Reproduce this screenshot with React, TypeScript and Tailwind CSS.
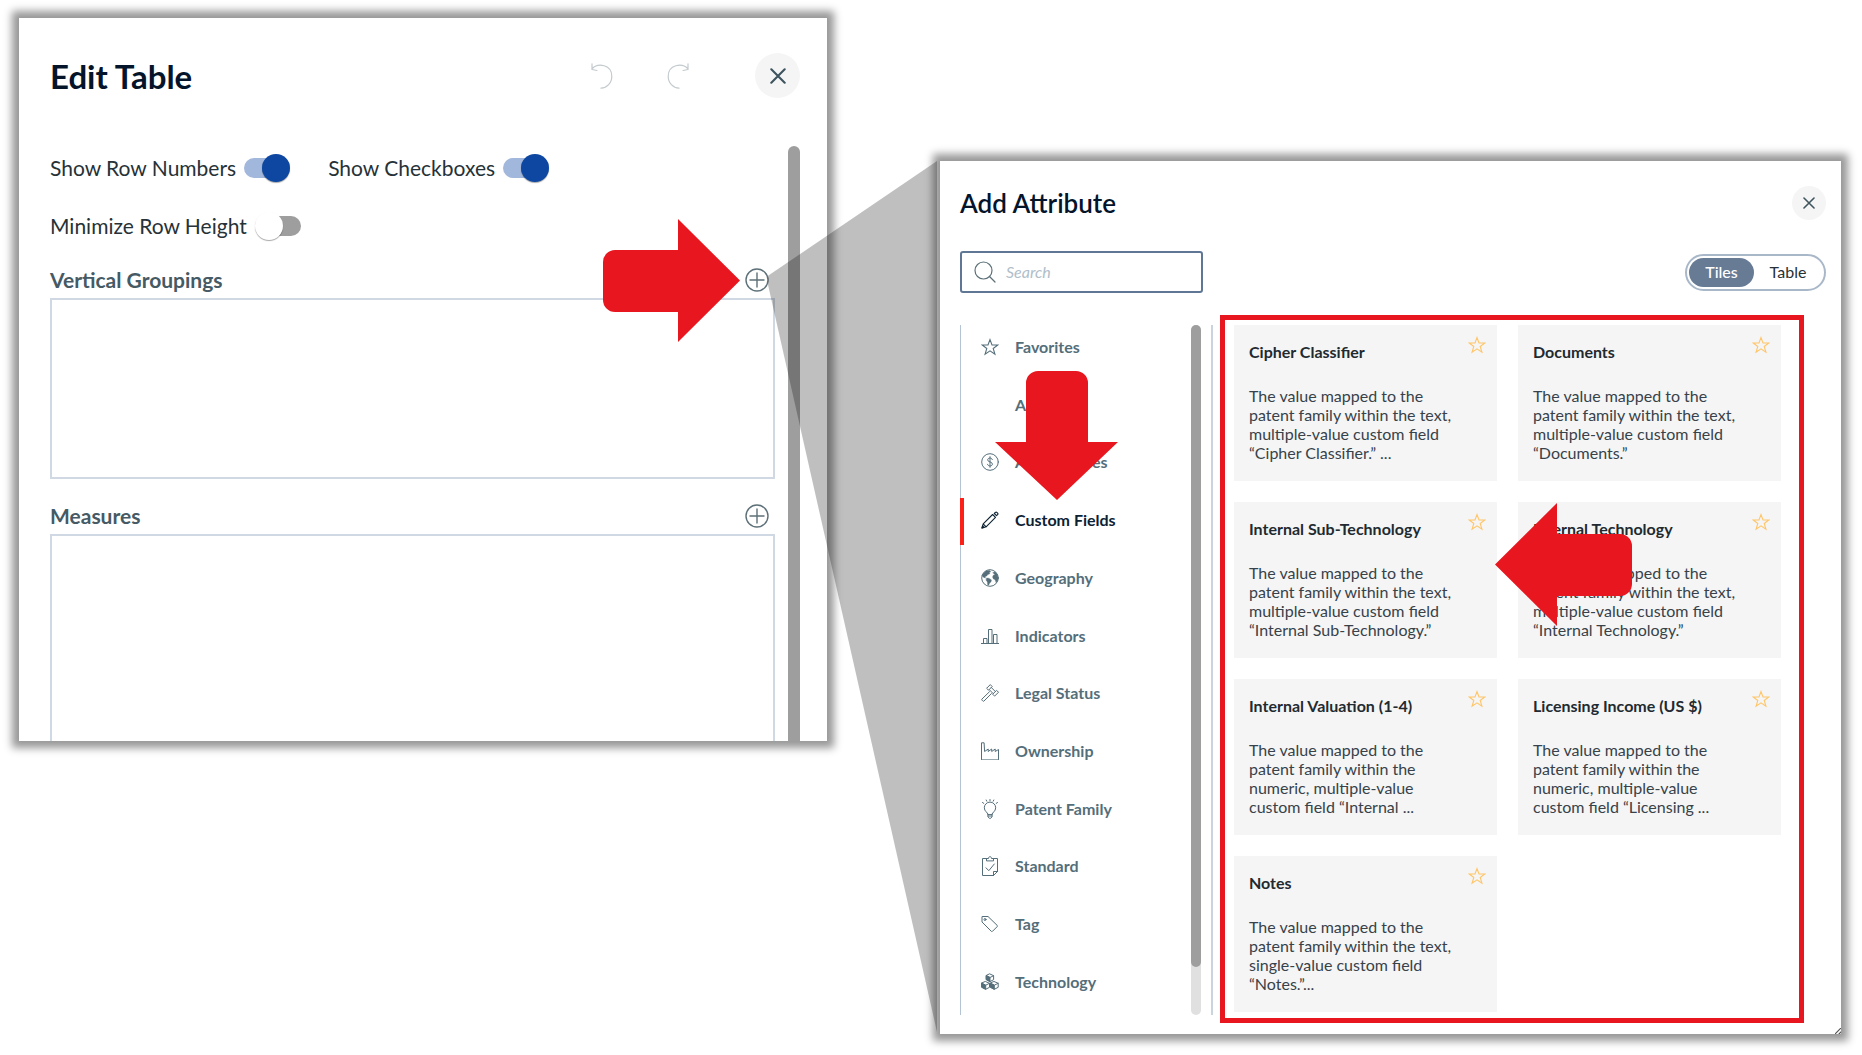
import React from "react";

type IconProps = { className?: string };

const svgBase = {
  fill: "none",
  stroke: "currentColor",
  strokeLinecap: "round" as const,
  strokeLinejoin: "round" as const,
  "aria-hidden": true,
};

function StarIcon({ className = "size-[18px]" }: IconProps) {
  return (
    <svg viewBox="0 0 18 18" strokeWidth="1.1" {...svgBase} strokeLinejoin="miter" className={className}>
      <path d="M9 1.6 11 7h5.8l-4.6 3.5 1.7 5.7L9 12.8l-4.9 3.4 1.7-5.7L1.200 7H7z" />
    </svg>
  );
}

function DollarIcon() {
  return (
    <svg viewBox="0 0 18 18" strokeWidth="1" {...svgBase} className="size-[18px]">
      <circle cx="9" cy="9" r="8.300" />
      <path d="M11.300 6.600C11 5.500 10.100 5 9 5 7.700 5 6.700 5.700 6.700 6.900c0 2.700 4.700 1.400 4.700 4.200 0 1.200-1.100 1.900-2.400 1.900-1.300 0-2.200-.6-2.500-1.700M9 3.700v10.600" />
    </svg>
  );
}

function PencilIcon() {
  return (
    <svg viewBox="0 0 18 18" strokeWidth="1.1" {...svgBase} className="size-[18px]">
      <path d="M1 17l1.200-4.200L11.600 3.500l2.900 2.900L5.100 15.800zM2.200 12.800l2.900 3" />
      <path d="M13.300 2.500l1.100-1.100c.4-.4 1-.4 1.400 0l.8.800c.4.4.4 1 0 1.400l-1.100 1.100z" />
      <path d="M1 17l.6-2.100 1.500 1.500z" fill="currentColor" />
    </svg>
  );
}

function GlobeIcon() {
  return (
    <svg viewBox="0 0 18 18" strokeWidth="1" {...svgBase} className="size-[18px]">
      <circle cx="9" cy="9" r="8.300" />
      <path
        d="M2.200 4.500 5 1.900l3.600-.4 1.200 1.300-1.700.9.900 1-2.100.8-1.200 1.500-1.600.7.300 1.200-1.800-.5-1.500-1.600zM5.500 9l2.400.2 2.600 1.700-.5 2-1.300 1-1 2.300-1.100-.5-.2-2.800-1.300-1.600zM12 3.300l2.300-.3 2 2.600.9 3.400-.7 2.800-1.500 1.700-.9-2.700-1.700-.9-.9-2 1-1.900 1.700-.4-1.500-.8z"
        fill="currentColor"
        strokeWidth=".3"
      />
    </svg>
  );
}

function ChartIcon() {
  return (
    <svg viewBox="0 0 18 18" strokeWidth="1" {...svgBase} className="size-[18px]">
      <path d="M0 16.500h18M2.500 16V11.500h3.500V16M7.500 16V2.500H11V16M12.500 16V7.500H16V16" strokeLinecap="butt" strokeLinejoin="miter" />
    </svg>
  );
}

function GavelIcon() {
  return (
    <svg viewBox="0 0 18 18" strokeWidth="1" {...svgBase} className="size-[18px]">
      <path d="M9 .9 5.600 4.300l1.900 1.900 3.400-3.400zM15.200 6.700l-3.500 3.500 1.900 1.900 3.700-3.600zM10.300 3.500l4 4M8.200 5.600l4 4" />
      <path d="M8.500 7.700 1 15c-.4.400-.4.800 0 1.200l.8.800c.4.400.8.400 1.200 0l7.400-7.400" />
    </svg>
  );
}

function FactoryIcon() {
  return (
    <svg viewBox="0 0 18 18" strokeWidth="1" {...svgBase} strokeLinejoin="miter" className="size-[18px]">
      <path d="M.5 17.500V.8h2.600l.5 8.700L7.200 7v2.500L10.700 7v2.500L14.200 7v2.500L17.500 7.500v10z" />
    </svg>
  );
}

function BulbIcon() {
  return (
    <svg viewBox="0 0 18 20" strokeWidth="1" {...svgBase} className="h-5 w-[18px]">
      <path d="M6.800 15.200c0-2-3.500-2.700-3.500-6.400a5.700 5.700 0 0 1 11.400 0c0 3.700-3.500 4.400-3.500 6.400zM7 15.200v2.600L8.300 19.300h1.400L11 17.800v-2.600M7 17h4" />
      <path d="M9 .5v1.300M5.200 1l.6 1.200M12.800 1l-.6 1.200M1.500 3.500l1.300.9M16.500 3.500l-1.300.9" />
    </svg>
  );
}

function ClipboardIcon() {
  return (
    <svg viewBox="0 0 18 20" strokeWidth="1" {...svgBase} className="h-5 w-[18px]">
      <path d="M5.500 2.500h-4v17h11l4-4v-13h-4M12.500 19.500v-4h4" />
      <path d="M5.500 4.500v-2h2C7.500 1.300 8 .7 9 .7s1.500.6 1.500 1.800h2v2z" />
      <path d="M5 11.800l2.800 2.900L13.300 8" />
    </svg>
  );
}

function TagIcon() {
  return (
    <svg viewBox="0 0 18 18" strokeWidth="1" {...svgBase} className="size-[18px]">
      <path d="M1 2v5l9.300 9.300c.4.4.8.4 1.200 0l4.700-4.700c.4-.4.4-.8 0-1.200L7 1.500H1.500z" />
      <circle cx="4" cy="4.500" r="1" />
    </svg>
  );
}

function CubesIcon() {
  return (
    <svg viewBox="0 0 18 18" strokeWidth="1" {...svgBase} className="size-[18px]">
      <path d="M9 1l3.600 1.700v4L9 8.600 5.400 6.700v-4zM5.400 2.700 9 4.500l3.600-1.800M4.700 8.600l3.800 1.700v4l-3.800 2-3.900-2v-4zM.8 10.300l3.900 1.900 3.800-1.900M13.300 8.600l3.900 1.700v4l-3.900 2-3.800-2v-4zM9.500 10.300l3.800 1.900 3.900-1.900" />
      <path d="M5.400 2.700 9 4.500v4.100L5.400 6.700zM.8 10.300l3.900 1.900v4.100l-3.900-2zM9.500 10.300l3.800 1.900v4.100l-3.800-2z" fill="currentColor" />
    </svg>
  );
}

function CloseIcon({ className }: IconProps) {
  return (
    <svg viewBox="0 0 16 16" strokeWidth="2.1" {...svgBase} className={className}>
      <path d="M1.300 1.300l13.400 13.400M14.700 1.300 1.300 14.700" />
    </svg>
  );
}

function UndoIcon({ className = "" }: IconProps) {
  return (
    <svg viewBox="0 0 22 26" strokeWidth="1.200" {...svgBase} className={"h-[26px] w-[22px] " + className}>
      <path d="M1.300 5.500C7 -.5 20.800 1.500 20.800 13.200c0 6.800-4.800 11.600-10.800 11.900M1 .8v5.700l5 1" />
    </svg>
  );
}

function PlusCircleIcon() {
  return (
    <svg viewBox="0 0 24 24" strokeWidth="1.400" {...svgBase} className="size-6">
      <circle cx="12" cy="12" r="11" />
      <path d="M12 5v14M5 12h14" />
    </svg>
  );
}

function SideArrow({ className = "" }: IconProps) {
  return (
    <svg viewBox="0 0 137 123" aria-hidden="true" className={"pointer-events-none absolute z-20 h-[123px] w-[137px] text-[#e8171f] " + className}>
      <path d="M12 31h63V0l62 61.500L75 123V93H12A12 12 0 0 1 0 81V43A12 12 0 0 1 12 31z" fill="currentColor" />
    </svg>
  );
}

function DownArrow({ className = "" }: IconProps) {
  return (
    <svg viewBox="0 0 123 129" aria-hidden="true" className={"pointer-events-none absolute z-20 h-[129px] w-[123px] text-[#e8171f] " + className}>
      <path d="M31 12A12 12 0 0 1 43 0H81A12 12 0 0 1 93 12V71h30L62 129 0 71H31z" fill="currentColor" />
    </svg>
  );
}

function Toggle({ label, on = false }: { label: string; on?: boolean }) {
  return (
    <label className="flex items-center gap-2">
      {label}
      <span className="relative flex h-8 w-12 items-center">
        <input
          type="checkbox"
          role="switch"
          defaultChecked={on}
          className="peer h-5 w-[46px] appearance-none rounded-full bg-[#9e9e9e] bg-clip-content pl-1 checked:bg-[#a2b7dc] checked:pr-1 checked:pl-0"
        />
        <span className="pointer-events-none absolute left-0 size-7 rounded-full bg-white shadow-[0_1px_1px_rgba(0,0,0,0.35)] peer-checked:left-[18px] peer-checked:bg-[#0d47a1]" />
      </span>
    </label>
  );
}

function Section({ title, arrow = false, boxClass }: { title: string; arrow?: boolean; boxClass: string }) {
  return (
    <section>
      <header className="flex h-[37px] items-center justify-between pr-[6px]">
        <h2 className="text-[21px] leading-7 font-bold text-[#455a64]">{title}</h2>
        <div className="relative flex">
          {arrow && <SideArrow className="top-[-49px] right-[29px]" />}
          <button type="button" aria-label={"Add to " + title} className="text-[#5d7078]">
            <PlusCircleIcon />
          </button>
        </div>
      </header>
      <div className={"border-2 border-[#d0d9e3] " + boxClass} />
    </section>
  );
}

const categories: { name: string; icon?: React.ReactNode }[] = [
  { name: "Favorites", icon: <StarIcon /> },
  { name: "All" },
  { name: "Annuity Fees", icon: <DollarIcon /> },
  { name: "Custom Fields", icon: <PencilIcon /> },
  { name: "Geography", icon: <GlobeIcon /> },
  { name: "Indicators", icon: <ChartIcon /> },
  { name: "Legal Status", icon: <GavelIcon /> },
  { name: "Ownership", icon: <FactoryIcon /> },
  { name: "Patent Family", icon: <BulbIcon /> },
  { name: "Standard", icon: <ClipboardIcon /> },
  { name: "Tag", icon: <TagIcon /> },
  { name: "Technology", icon: <CubesIcon /> },
];

const activeCategory = "Custom Fields";

const attributes = [
  { name: "Cipher Classifier", text: "The value mapped to the patent family within the text, multiple-value custom field “Cipher Classifier.” ..." },
  { name: "Documents", text: "The value mapped to the patent family within the text, multiple-value custom field “Documents.”" },
  { name: "Internal Sub-Technology", text: "The value mapped to the patent family within the text, multiple-value custom field “Internal Sub-Technology.”" },
  { name: "Internal Technology", text: "The value mapped to the patent family within the text, multiple-value custom field “Internal Technology.”", arrow: true },
  { name: "Internal Valuation (1-4)", text: "The value mapped to the patent family within the numeric, multiple-value custom field “Internal ..." },
  { name: "Licensing Income (US $)", text: "The value mapped to the patent family within the numeric, multiple-value custom field “Licensing ..." },
  { name: "Notes", text: "The value mapped to the patent family within the text, single-value custom field “Notes.”..." },
];

function EditTablePanel() {
  return (
    <div className="bg-white pr-[27px] pl-[31px] shadow-[0_0_8px_7px_#989898]">
      <header className="flex items-center pt-[35px]">
        <h1 className="flex-1 text-[33px] leading-10 font-bold text-[#04142b]">Edit Table</h1>
        <button type="button" aria-label="Undo" className="mr-[54px] text-[#c3cacd]">
          <UndoIcon />
        </button>
        <button type="button" aria-label="Redo" className="mr-[66px] text-[#c3cacd]">
          <UndoIcon className="-scale-x-100" />
        </button>
        <button type="button" aria-label="Close" className="grid size-[45px] place-items-center rounded-full bg-[#f5f5f5] text-[#3e545e]">
          <CloseIcon className="size-4" />
        </button>
      </header>
      <div className="mt-12 flex gap-[13px]">
        <div className="min-w-0 flex-1">
          <div className="flex flex-wrap gap-x-9 gap-y-[26px] pt-1.5 pb-[19px] text-[21px] leading-8 text-[#263238]">
            <Toggle label="Show Row Numbers" on />
            <Toggle label="Show Checkboxes" on />
            <Toggle label="Minimize Row Height" />
          </div>
          <div className="flex flex-col gap-[18px]">
            <Section title="Vertical Groupings" arrow boxClass="h-[181px]" />
            <Section title="Measures" boxClass="h-[207px] border-b-0" />
          </div>
        </div>
        <div className="w-3 rounded-t-full bg-[#9e9e9e]" />
      </div>
    </div>
  );
}

function AddAttributePanel() {
  return (
    <div className="relative mt-[143px] bg-white px-5 pt-[25px] pb-[11px] shadow-[0_0_8px_7px_#989898]">
      <svg viewBox="0 0 169 874" preserveAspectRatio="none" aria-hidden="true" className="pointer-events-none absolute top-0 right-full z-10 mr-[3px] h-full w-[169px]">
        <path d="M0 115 169 0V872L0 124z" fill="#000" fillOpacity=".25" />
      </svg>
      <header className="-mr-[5px] flex items-center justify-between">
        <h1 className="text-[26px] leading-[34px] font-semibold text-[#04142b]">Add Attribute</h1>
        <button type="button" aria-label="Close" className="grid size-[34px] place-items-center rounded-full bg-[#f5f5f5] text-[#3e545e]">
          <CloseIcon className="size-3" />
        </button>
      </header>
      <div className="mt-[31px] -mr-[5px] flex items-center justify-between">
        <label className="flex h-[42px] w-[243px] items-center gap-[10px] rounded-[3px] border-2 border-[#5f7795] px-3">
          <svg viewBox="0 0 22 22" strokeWidth="1.200" {...svgBase} className="size-[22px] shrink-0 text-[#5d7078]">
            <circle cx="9.500" cy="9.500" r="8.500" />
            <path d="M15.500 15.500l5.500 5.500" />
          </svg>
          <input
            type="text"
            aria-label="Search"
            placeholder="Search"
            className="min-w-0 flex-1 bg-transparent text-base italic outline-none placeholder:text-[#b0bec9]"
          />
        </label>
        <div className="flex h-[37px] items-center rounded-full border-2 border-[#a9b8c9] p-0.5 text-base text-[#263238]">
          <button type="button" aria-pressed="true" className="h-[29px] w-[65px] rounded-full bg-[#677b95] font-medium text-white">
            Tiles
          </button>
          <button type="button" aria-pressed="false" className="h-[29px] w-[68px] rounded-full">
            Table
          </button>
        </div>
      </div>
      <div className="mt-[22px] flex">
        <div className="mt-2.5 mb-2 flex w-[253px] justify-between border-r-2 border-l border-r-[#c9d4df] border-l-[#b4c4d5] pr-[10px]">
          <nav className="-ml-px flex flex-1 flex-col justify-between pb-2">
            {categories.map((c) => {
              const active = c.name === activeCategory;
              return (
                <div key={c.name} className="relative">
                  {active && <DownArrow className="bottom-[45px] left-[35px]" />}
                  <button
                    type="button"
                    className={
                      "flex h-[47px] w-full items-center border-l-4 pb-[3px] pl-[17px] text-left text-base font-bold " +
                      (active ? "border-[#fb2018] text-[#0c2233]" : "border-transparent text-[#546e7a]")
                    }
                  >
                    <span className="flex w-[34px]">{c.icon}</span>
                    {c.name}
                  </button>
                </div>
              );
            })}
          </nav>
          <div className="w-2.5 rounded-full bg-[#e0e0e0]">
            <div className="h-[93%] rounded-full bg-[#9e9e9e]" />
          </div>
        </div>
        <div className="mr-[17px] ml-[7px] flex-1 border-5 border-[#e8171f] pt-[5px] pr-[18px] pb-1.5 pl-[9px]">
          <ul className="grid grid-cols-2 gap-[21px]">
            {attributes.map((a) => (
              <li key={a.name} className="relative bg-[#f5f5f5] pt-[15px] pb-[19px] pl-[15px]">
                {a.arrow && <SideArrow className="top-px left-[-23px] -scale-x-100" />}
                <button type="button" aria-label={"Add " + a.name + " to favorites"} className="absolute top-[11px] right-[11px] text-[#ffc568]">
                  <StarIcon />
                </button>
                <h2 className="text-base leading-6 font-bold text-[#212a30]">{a.name}</h2>
                <p className="mt-[22px] pr-8 text-base leading-[19px] text-[#37424a]">{a.text}</p>
              </li>
            ))}
          </ul>
        </div>
      </div>
      <svg viewBox="0 0 6 6" strokeWidth="1.200" {...svgBase} className="absolute right-0 bottom-0 size-1.5 text-[#555]">
        <path d="M0 6 6 0M4 6l2-2" />
      </svg>
    </div>
  );
}

export default function App() {
  return (
    <main className="grid min-h-screen grid-cols-[808fr_901fr] items-start gap-x-[113px] overflow-hidden bg-white pt-[18px] pr-[21px] pb-5 pl-[19px] font-['Lato',sans-serif]">
      <EditTablePanel />
      <AddAttributePanel />
    </main>
  );
}
